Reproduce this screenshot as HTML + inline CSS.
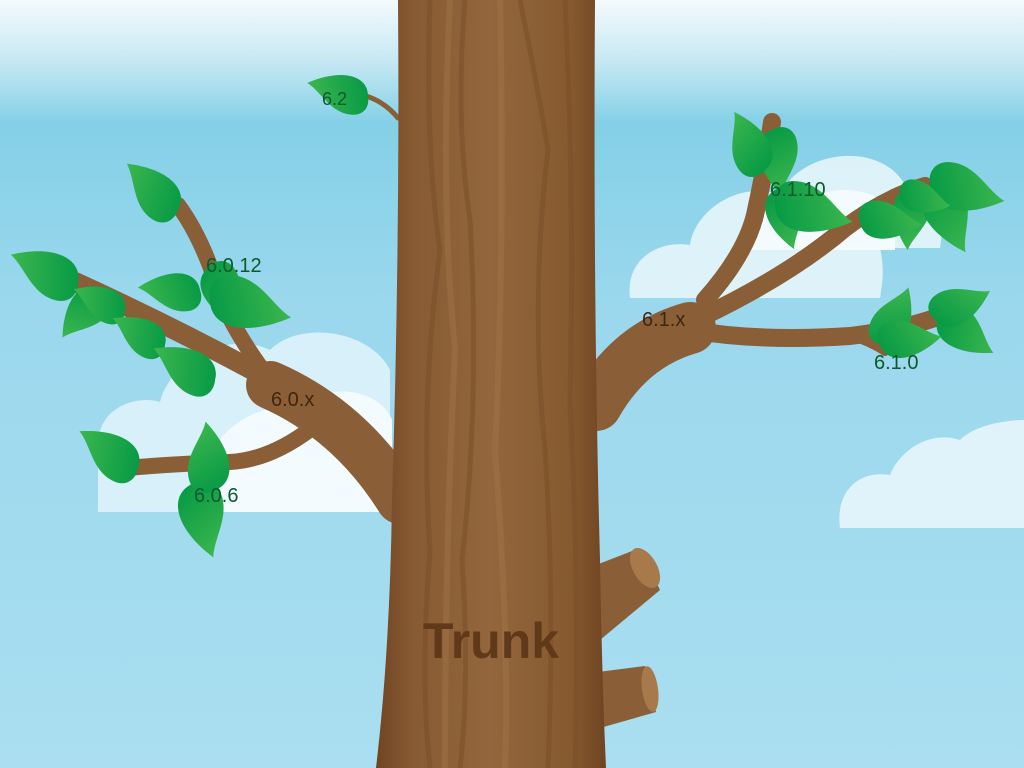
<!DOCTYPE html>
<html><head><meta charset="utf-8"><style>
html,body{margin:0;padding:0;width:1024px;height:768px;overflow:hidden}
svg{display:block}
text{font-family:"Liberation Sans",sans-serif}
</style></head><body>
<svg width="1024" height="768" viewBox="0 0 1024 768" xmlns="http://www.w3.org/2000/svg">
<defs>
<linearGradient id="sky" x1="0" y1="0" x2="0" y2="1">
<stop offset="0" stop-color="#f4fafd"/>
<stop offset="0.08" stop-color="#c6e8f3"/>
<stop offset="0.16" stop-color="#84d0e7"/>
<stop offset="0.4" stop-color="#9bd8ed"/>
<stop offset="1" stop-color="#aadef0"/>
</linearGradient>
<linearGradient id="leafg" x1="0" y1="0" x2="1" y2="0">
<stop offset="0" stop-color="#3cb64e"/>
<stop offset="1" stop-color="#079a45"/>
</linearGradient>
<linearGradient id="trunkg" x1="0" y1="0" x2="1" y2="0">
<stop offset="0" stop-color="#6f4422"/>
<stop offset="0.15" stop-color="#875a33"/>
<stop offset="0.5" stop-color="#93663d"/>
<stop offset="0.85" stop-color="#86592f"/>
<stop offset="1" stop-color="#6f4422"/>
</linearGradient>
<path id="leaf" d="M0,0 C4,-22 -22,-36 -64,-26 C-50,-14 -44,14 -18,18 C-6,19 0,10 0,0Z" fill="url(#leafg)"/>
</defs>
<rect width="1024" height="768" fill="url(#sky)"/>
<g fill="#e6f5fb">
<path d="M98,445 C98,405 140,395 160,402 C170,360 230,330 270,350 C300,320 370,330 390,370 L390,512 L98,512Z" opacity="0.8"/>
<path d="M195,512 C195,440 250,400 300,408 C330,380 380,390 392,420 L392,512Z" fill="#f4fbfe"/>
<path d="M630,298 C625,258 660,240 690,245 C695,210 740,180 780,195 C800,150 880,140 905,185 C940,190 945,220 940,248 L880,248 C885,270 882,285 880,298Z" opacity="0.9"/>
<path d="M740,250 C740,215 770,200 800,210 C820,180 880,185 895,215 L895,250Z" fill="#f3fbfe"/>
<path d="M840,528 C835,490 860,470 890,475 C900,450 930,430 960,440 C980,420 1024,420 1024,420 L1024,528Z" opacity="0.92"/>
</g>
<g fill="none" stroke="#8a5f37" stroke-linecap="round" stroke-linejoin="round">
<path d="M400,500 Q350,420 270,385" stroke-width="48"/>
<path d="M280,385 Q180,330 75,282" stroke-width="20"/>
<path d="M270,380 Q225,320 215,280 Q200,235 178,205" stroke-width="16"/>
<path d="M312,428 Q270,460 230,462 Q170,464 128,468" stroke-width="16"/>
<path d="M398,118 Q385,102 366,96" stroke-width="5"/>
<path d="M596,405 Q630,345 690,328" stroke-width="52"/>
<path d="M705,300 Q745,255 755,215 Q765,170 772,122" stroke-width="18"/>
<path d="M700,318 Q790,275 845,228 Q885,198 925,186" stroke-width="18"/>
<path d="M690,330 Q760,342 850,336 Q900,330 935,318" stroke-width="18"/>
<path d="M850,336 Q870,342 885,352" stroke-width="8"/>
</g>
<g>
<path d="M596,565 L640,548 L660,590 L600,640Z" fill="#8a5f37"/>
<ellipse cx="645" cy="568" rx="12" ry="22" transform="rotate(-30 645 568)" fill="#a87a4b"/>
<path d="M598,672 L645,666 L656,712 L600,728Z" fill="#8a5f37"/>
<ellipse cx="650" cy="689" rx="8" ry="23" transform="rotate(-8 650 689)" fill="#a87a4b"/>
</g>
<path d="M398,0 L595,0 Q593,300 600,560 Q602,680 606,768 L376,768 Q390,650 392,500 Q400,250 398,0Z" fill="url(#trunkg)"/>
<g fill="none" stroke="#7c5029" stroke-width="5" opacity="0.6">
<path d="M430,0 Q425,150 440,250 Q420,400 430,550 Q420,680 430,768"/>
<path d="M465,0 Q455,120 470,220 Q480,400 462,560 Q470,680 460,768"/>
<path d="M520,0 Q540,100 548,150 Q530,300 545,450 Q555,600 548,768"/>
<path d="M565,0 Q575,200 570,400 Q580,600 575,768"/>
</g>
<g fill="none" stroke="#a47649" stroke-width="6" opacity="0.45">
<path d="M450,0 Q440,200 455,350 Q445,550 445,768"/>
<path d="M500,0 Q505,250 495,450 Q510,650 505,768"/>
</g>
<g>
<use href="#leaf" transform="translate(368,96) rotate(-10) scale(0.9)"/>
<use href="#leaf" transform="translate(178,210) rotate(20)"/>
<use href="#leaf" transform="translate(100,288) rotate(-75) scale(0.9)"/>
<use href="#leaf" transform="translate(78,282) rotate(0) scale(1.05)"/>
<use href="#leaf" transform="translate(125,310) rotate(0) scale(0.8)"/>
<use href="#leaf" transform="translate(165,345) rotate(5) scale(0.85)"/>
<use href="#leaf" transform="translate(215,380) rotate(5) scale(1)"/>
<use href="#leaf" transform="translate(200,290) rotate(-20) scale(0.9)"/>
<use href="#leaf" transform="translate(208,268) rotate(-140) scale(0.95)"/>
<use href="#leaf" transform="translate(210,300) rotate(170) scale(1.2)"/>
<use href="#leaf" transform="translate(138,468) rotate(10) scale(1)"/>
<use href="#leaf" transform="translate(190,485) rotate(-130) scale(1.1)"/>
<use href="#leaf" transform="translate(215,490) rotate(60) scale(1)"/>
<use href="#leaf" transform="translate(772,130) rotate(-120) scale(0.95)"/>
<use href="#leaf" transform="translate(765,170) rotate(40) scale(0.95)"/>
<use href="#leaf" transform="translate(775,190) rotate(-130) scale(0.9)"/>
<use href="#leaf" transform="translate(775,205) rotate(170) scale(1.15)"/>
<use href="#leaf" transform="translate(910,188) rotate(-110) scale(0.9)"/>
<use href="#leaf" transform="translate(930,185) rotate(-140) scale(1.1)"/>
<use href="#leaf" transform="translate(930,185) rotate(170) scale(1.1)"/>
<use href="#leaf" transform="translate(900,195) rotate(170) scale(0.75)"/>
<use href="#leaf" transform="translate(860,222) rotate(160) scale(0.9)"/>
<use href="#leaf" transform="translate(938,318) rotate(-170) scale(0.95)"/>
<use href="#leaf" transform="translate(935,320) rotate(130) scale(0.9)"/>
<use href="#leaf" transform="translate(885,345) rotate(90) scale(0.9)"/>
<use href="#leaf" transform="translate(880,345) rotate(150) scale(0.9)"/>
</g>
<g font-size="20" fill="#0b5a2c">
<text x="322" y="105" font-size="18">6.2</text>
<text x="206" y="272">6.0.12</text>
<text x="194" y="502">6.0.6</text>
<text x="770" y="196">6.1.10</text>
<text x="874" y="369">6.1.0</text>
</g>
<g font-size="20" fill="#3e2612">
<text x="271" y="406">6.0.x</text>
<text x="642" y="326">6.1.x</text>
</g>
<text x="491" y="658" font-size="50" font-weight="bold" fill="#60391a" text-anchor="middle">Trunk</text>
</svg>
</body></html>
